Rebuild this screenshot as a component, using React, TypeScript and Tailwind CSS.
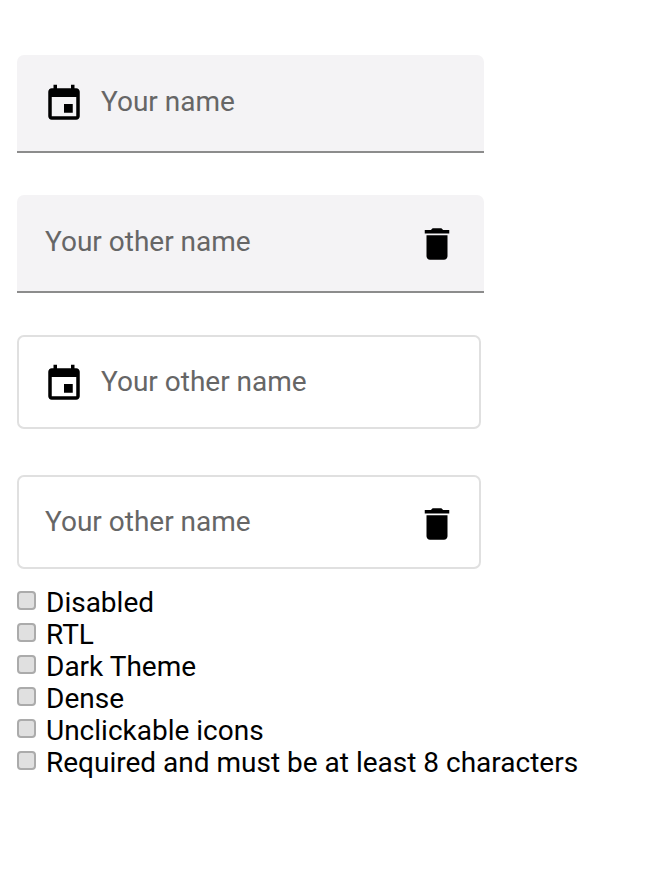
const CAL = "M17 12h-5v5h5v-5zM16 1v2H8V1H6v2H5c-1.11 0-1.99.9-1.99 2L3 19c0 1.1.89 2 2 2h14c1.1 0 2-.9 2-2V5c0-1.1-.9-2-2-2h-1V1h-2zm3 18H5V8h14v11z";
const DEL = "M6 19c0 1.1.9 2 2 2h8c1.1 0 2-.9 2-2V7H6v12zM19 4h-3.5l-1-1h-5l-1 1H5v2h14V4z";

function Icon({ d, className }: { d: string; className?: string }) {
  return (
    <svg viewBox="0 0 24 24" className={`h-[42px] w-[42px] shrink-0 fill-black ${className ?? ""}`}>
      <path d={d} />
    </svg>
  );
}

function Check({ label }: { label: string }) {
  return (
    <label className="flex h-8 items-start">
      <input
        type="checkbox"
        className="mt-[4px] mr-[10px] h-[19px] w-[19px] shrink-0 appearance-none rounded-[4px] border-2 border-[#ababab] bg-[#e0e0e0]"
      />
      <span className="whitespace-nowrap text-[28px] leading-8 text-black">{label}</span>
    </label>
  );
}

export default function App() {
  return (
    <div className="flex h-[880px] w-[656px] flex-col overflow-hidden bg-white pl-[17px] pt-[55px] font-['Roboto',sans-serif]">
      <div className="flex h-[98px] w-[467px] items-center rounded-t-[7px] border-b-2 border-[#8c8c8c] bg-[#f4f3f5] pl-[26px]">
        <Icon d={CAL} className="mt-[2px]" />
        <span className="ml-[16px] mb-[2px] text-[28px] text-[#666]">Your name</span>
      </div>
      <div className="mt-[42px] flex h-[98px] w-[467px] items-center justify-between rounded-t-[7px] border-b-2 border-[#8c8c8c] bg-[#f4f3f5] pl-[28px] pr-[26px]">
        <span className="mb-[2px] text-[28px] text-[#666]">Your other name</span>
        <Icon d={DEL} className="mt-[2px]" />
      </div>
      <div className="mt-[42px] flex h-[94px] w-[464px] items-center rounded-[7px] border-2 border-[#e0e0e0] pl-[24px]">
        <Icon d={CAL} className="mt-[4px]" />
        <span className="ml-[16px] text-[28px] text-[#666]">Your other name</span>
      </div>
      <div className="mt-[46px] flex h-[94px] w-[464px] items-center justify-between rounded-[7px] border-2 border-[#e0e0e0] pl-[26px] pr-[21px]">
        <span className="text-[28px] text-[#666]">Your other name</span>
        <Icon d={DEL} className="mt-[4px]" />
      </div>
      <div className="mt-[18px] flex flex-col">
        <Check label="Disabled" />
        <Check label="RTL" />
        <Check label="Dark Theme" />
        <Check label="Dense" />
        <Check label="Unclickable icons" />
        <Check label="Required and must be at least 8 characters" />
      </div>
    </div>
  );
}
